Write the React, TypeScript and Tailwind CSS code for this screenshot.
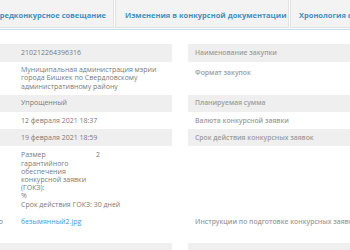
export default function App() {
  const gray = "bg-[#efefef]";
  const leftCell = "pl-[21px] pr-[6px] text-[#7b7b7b]";
  const rightCell = "pl-[7px] pr-[6px] text-[#9d9d9d] font-semibold text-[6.8px] whitespace-nowrap";
  const tab =
    "flex shrink-0 h-[28px] items-center pt-[4px] bg-[#f3f3f3] border border-[#e2e2e2] border-t-0 text-[7.5px] font-bold text-[#4490bf] whitespace-nowrap overflow-hidden";
  return (
    <div className="w-[350px] h-[250px] overflow-hidden bg-white font-['Open_Sans',sans-serif] text-[7px] leading-[8.2px]">
      <div className="flex h-[30px] border-b border-[#c4e0ef] bg-white overflow-hidden">
        <div className={`${tab} w-[134px] -ml-[20px] justify-end pr-[7px]`}>Предконкурсное совещание</div>
        <div className={`${tab} w-[174px] ml-[1px] pl-[9px]`}>Изменения в конкурсной документации</div>
        <div className={`${tab} w-[130px] ml-[1px] pl-[8px]`}>Хронология событий</div>
      </div>
      <div className="pt-[14px] grid grid-cols-[172px_200px] gap-x-[16px]">
        <div className={`${gray} ${leftCell} py-[5px]`}>210212264396316</div>
        <div className={`${gray} ${rightCell} py-[5px]`}>Наименование закупки</div>

        <div className={`${leftCell} py-[4px]`}>
          Муниципальная администрация мэрии города Бишкек по Свердловскому административному району
        </div>
        <div className={`${rightCell} pt-[7px]`}>Формат закупок</div>

        <div className={`${gray} ${leftCell} py-[4.5px]`}>Упрощенный</div>
        <div className={`${gray} ${rightCell} py-[4.5px]`}>Планируемая сумма</div>

        <div className={`${leftCell} py-[4.5px]`}>12 февраля 2021 18:37</div>
        <div className={`${rightCell} py-[4.5px]`}>Валюта конкурсной заявки</div>

        <div className={`${gray} ${leftCell} py-[4.5px]`}>19 февраля 2021 18:59</div>
        <div className={`${gray} ${rightCell} py-[4.5px]`}>Срок действия конкурсных заявок</div>

        <div className={`${leftCell} pt-[5px] pb-[4px]`}>
          <div className="grid grid-cols-[75px_1fr]">
            <div>
              <div>Размер</div>
              <div>гарантийного</div>
              <div>обеспечения</div>
              <div>конкурсной заявки</div>
              <div>(ГОКЗ):</div>
              <div>%</div>
            </div>
            <div>2</div>
          </div>
          <div>Срок действия ГОКЗ: 30 дней</div>
        </div>
        <div></div>

        <div className="flex h-[30px] pt-[5px]">
          <div className="shrink-0 w-[60px] -ml-[57px] text-right text-[#7b7b7b]">Фото</div>
          <div className="pl-[18px] text-[#3b9bd0]">безымянный2.jpg</div>
        </div>
        <div className="h-[30px] pt-[5px] pl-[7px] text-[#9d9d9d] font-semibold text-[6.8px] whitespace-nowrap">
          Инструкции по подготовке конкурсных заявок
        </div>

        <div className={`${gray} h-[20px]`}></div>
        <div className={`${gray} h-[20px]`}></div>
      </div>
    </div>
  );
}
